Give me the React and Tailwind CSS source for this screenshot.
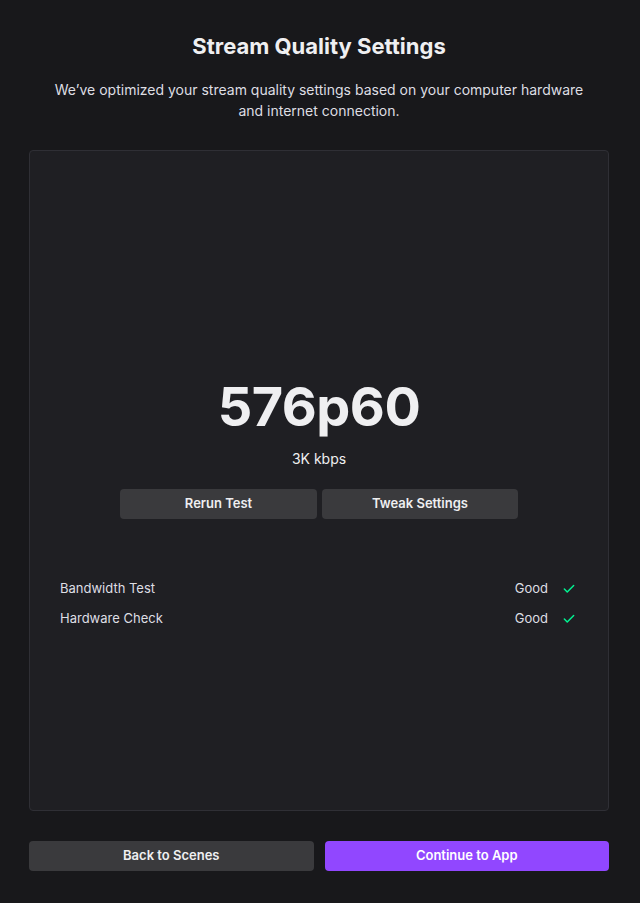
import { Check } from "lucide-react";

function StatusRow({ label, value }) {
  return (
    <div className="flex items-center justify-between h-[30px]">
      <span className="text-[13px] text-[#dedee3]">{label}</span>
      <div className="flex items-center gap-[14px]">
        <span className="text-[13px] text-[#dedee3]">{value}</span>
        <Check size={14} strokeWidth={2.5} className="text-[#00f593]" />
      </div>
    </div>
  );
}

export default function App() {
  return (
    <div
      className="w-[640px] h-[903px] bg-[#18181b] flex flex-col pl-[29px] pr-[31px]"
      style={{ fontFamily: "Inter, 'Noto Sans', sans-serif" }}
    >
      <h1 className="mt-[30px] text-center text-[22px] font-bold text-[#efeff1] leading-[32px]">
        Stream Quality Settings
      </h1>
      <p className="mt-[17px] text-center text-[14px] leading-[21px] text-[#dedee3] px-4">
        We’ve optimized your stream quality settings based on your computer hardware
        <br />
        and internet connection.
      </p>

      <div className="mt-[29px] h-[661px] bg-[#1f1f23] border border-[#2f2f35] rounded-[4px] flex flex-col">
        <div className="pt-[228px] flex flex-col items-center">
          <div className="text-[54px] leading-[56px] font-bold text-[#efeff1] tracking-[-0.5px]">
            576p60
          </div>
          <div className="mt-[14px] text-[14px] leading-[20px] text-[#efeff1]">3K kbps</div>
          <div className="mt-[20px] flex gap-[5px]">
            <button className="w-[197px] h-[30px] rounded-[4px] bg-[#3a3a3d] text-[13px] font-semibold text-[#efeff1]">
              Rerun Test
            </button>
            <button className="w-[196px] h-[30px] rounded-[4px] bg-[#3a3a3d] text-[13px] font-semibold text-[#efeff1]">
              Tweak Settings
            </button>
          </div>
        </div>
        <div className="mt-[55px] pl-[30px] pr-[32px]">
          <StatusRow label="Bandwidth Test" value="Good" />
          <StatusRow label="Hardware Check" value="Good" />
        </div>
      </div>

      <div className="mt-[30px] grid grid-cols-2 gap-[11px]">
        <button className="h-[30px] rounded-[4px] bg-[#3a3a3d] text-[13px] font-semibold text-[#efeff1]">
          Back to Scenes
        </button>
        <button className="h-[30px] rounded-[4px] bg-[#9147ff] text-[13px] font-semibold text-white">
          Continue to App
        </button>
      </div>
    </div>
  );
}
